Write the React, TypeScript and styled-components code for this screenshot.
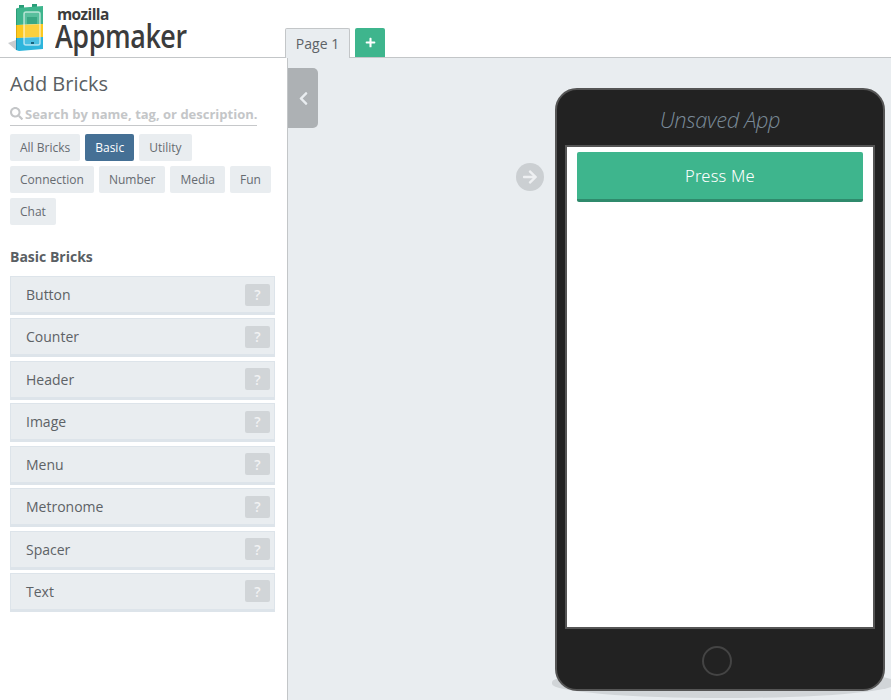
import { createGlobalStyle, styled } from "styled-components"
import { FaArrowRight, FaChevronLeft, FaPlus, FaSearch } from "react-icons/fa"

const GlobalStyle = createGlobalStyle`
  html, body {
    margin: 0;
    height: 100%;
    overflow: hidden;
    background: #fff;
  }
  body {
    font-family: "Open Sans", "Liberation Sans", sans-serif;
    color: #5a5f64;
  }
  * {
    box-sizing: border-box;
  }
`

const Page = styled.div`
  width: 891px;
  height: 700px;
  display: flex;
  flex-direction: column;
`

const TopBar = styled.header`
  height: 58px;
  flex: none;
  display: flex;
  align-items: flex-end;
  border-bottom: 1px solid #c3c6c8;
`

const LogoWrap = styled.div`
  width: 285px;
  height: 57px;
  flex: none;
  display: flex;
  padding: 4px 0 0 8px;
  gap: 9px;
`

const LogoWords = styled.div`
  display: flex;
  flex-direction: column;
`

const LogoSmall = styled.span`
  font-size: 15.5px;
  font-weight: 700;
  line-height: 18px;
  letter-spacing: -0.6px;
  color: #3c3c3c;
  padding: 1px 0 0 2px;
`

const LogoBig = styled.span`
  font-size: 32px;
  font-weight: 600;
  line-height: 26px;
  letter-spacing: -0.5px;
  color: #3c3c3c;
  white-space: nowrap;
  transform: scaleX(0.84);
  transform-origin: left center;
`

const Tab = styled.div`
  width: 65px;
  height: 30px;
  margin-bottom: -1px;
  display: flex;
  align-items: center;
  justify-content: center;
  font-size: 14px;
  color: #5d6266;
  background: #e9edf0;
  border: 1px solid #c3c6c8;
  border-bottom: none;
  border-radius: 2px 2px 0 0;
`

const AddTab = styled.button`
  width: 30px;
  height: 29px;
  margin-left: 5px;
  padding: 0;
  display: flex;
  align-items: center;
  justify-content: center;
  border: none;
  border-radius: 2px 2px 0 0;
  background: #3eb58d;
  color: #fff;
  font-size: 11px;
`

const Content = styled.div`
  flex: 1;
  min-height: 0;
  display: flex;
`

const Sidebar = styled.aside`
  width: 288px;
  flex: none;
  padding: 12px 12px 0 10px;
  border-right: 1px solid #c3c6c8;
  background: #fff;
`

const Title = styled.h1`
  margin: 0;
  font-size: 20px;
  font-weight: 400;
  line-height: 28px;
  color: #5a5f64;
`

const SearchRow = styled.div`
  width: 247px;
  height: 24px;
  margin-top: 4px;
  display: flex;
  align-items: center;
  gap: 2px;
  border-bottom: 1px solid #c6c8ca;
  color: #c4c6c8;
  font-size: 13px;
  font-weight: 700;
  white-space: nowrap;
  svg {
    font-size: 13px;
    flex: none;
  }
`

const Chips = styled.div`
  margin-top: 8px;
  display: flex;
  flex-wrap: wrap;
  gap: 5px;
`

const Chip = styled.button<{ $active?: boolean }>`
  height: 27px;
  padding: 0 10px;
  border: none;
  border-radius: 2px;
  font-family: inherit;
  font-size: 12px;
  color: ${(p) => (p.$active ? "#fff" : "#666b70")};
  background: ${(p) => (p.$active ? "#457095" : "#e9edf0")};
`

const SectionTitle = styled.h2`
  margin: 22px 0 9px;
  font-size: 14px;
  font-weight: 700;
  line-height: 20px;
  color: #5a5f64;
`

const BrickList = styled.ul`
  margin: 0;
  padding: 0;
  list-style: none;
  width: 265px;
  display: flex;
  flex-direction: column;
  gap: 3.43px;
`

const Brick = styled.li`
  height: 39px;
  display: flex;
  align-items: center;
  justify-content: space-between;
  padding: 0 4px 0 15px;
  font-size: 14px;
  color: #5d6266;
  background: #e9edf0;
  border: 1px solid #dde4ea;
  border-bottom-width: 3px;
`

const HelpBadge = styled.span`
  width: 25px;
  height: 22px;
  display: flex;
  align-items: center;
  justify-content: center;
  border-radius: 2px;
  font-size: 14px;
  font-weight: 600;
  color: #f1f2f3;
  background: #d1d5d8;
`

const Workspace = styled.main`
  flex: 1;
  min-width: 0;
  height: 100%;
  display: flex;
  align-items: flex-start;
  background: #e9edf0;
  isolation: isolate;
  overflow: hidden;
`

const CollapseHandle = styled.button`
  width: 30px;
  height: 60px;
  margin-top: 10px;
  padding: 0;
  flex: none;
  display: flex;
  align-items: center;
  justify-content: center;
  border: none;
  border-radius: 0 5px 5px 0;
  background: #adb1b4;
  color: #e9edf0;
  font-size: 15px;
`

const Stage = styled.div`
  flex: 1;
  display: flex;
  justify-content: flex-end;
  align-items: flex-start;
  padding: 30px 6px 0 0;
  gap: 11px;
`

const NextButton = styled.div`
  width: 28px;
  height: 28px;
  margin-top: 75px;
  flex: none;
  display: flex;
  align-items: center;
  justify-content: center;
  border-radius: 50%;
  background: #cbcfd2;
  color: #eef0f2;
  font-size: 16px;
`

const Phone = styled.div`
  position: relative;
  width: 330px;
  height: 603px;
  flex: none;
  display: flex;
  flex-direction: column;
  align-items: center;
  padding: 0 8px;
  background: #222;
  border: 2px solid #555;
  border-radius: 22px;
  &::before {
    content: "";
    position: absolute;
    z-index: -1;
    left: -5px;
    right: -12px;
    bottom: -9px;
    height: 30px;
    border-radius: 50%/14px;
    background: #d1d5d8;
  }
`

const PhoneTitle = styled.div`
  height: 55px;
  padding-top: 4px;
  flex: none;
  display: flex;
  align-items: center;
  font-size: 21.8px;
  font-style: italic;
  font-weight: 300;
  color: #7a8a98;
  letter-spacing: -0.3px;
`

const Screen = styled.div`
  width: 310px;
  height: 484px;
  flex: none;
  padding: 5px 10px 0;
  background: #fff;
  border: 2px solid #555;
`

const PressButton = styled.button`
  width: 100%;
  height: 50px;
  border: none;
  border-bottom: 3px solid #2f8a6c;
  border-radius: 2px;
  background: #3eb58d;
  color: #fff;
  font-family: "Noto Sans", "Open Sans", sans-serif;
  font-size: 16.5px;
  font-weight: 300;
  letter-spacing: 0.2px;
`

const HomeRing = styled.div`
  width: 30px;
  height: 30px;
  margin: 17px 6px 0 0;
  flex: none;
  border: 2px solid #444;
  border-radius: 50%;
`

const LogoMark = () => (
  <svg width="38" height="48" viewBox="0 0 38 48">
    <polygon points="0,39 8,36 8,46" fill="#c9cccf" />
    <rect x="11" y="1" width="5" height="4" fill="#2a9d78" />
    <rect x="24" y="0" width="5" height="4" fill="#2a9d78" />
    <polygon points="9,4 35,2 35,20 9,21" fill="#3eb58d" />
    <polygon points="9,4 9,21 8,21 8,5" fill="#2c9c78" />
    <polygon points="9,21 35,20 35,33 9,34" fill="#fcc91f" />
    <polygon points="9,21 9,34 8,34 8,21" fill="#e0aa10" />
    <polygon points="9,34 35,33 35,45 11,47 8,46" fill="#2db5dc" />
    <polygon points="9,34 9,46 8,46 8,34" fill="#1c93b8" />
    <rect x="16" y="8" width="16" height="33" rx="2" fill="#fff" fillOpacity="0.14" stroke="#fff" strokeOpacity="0.6" strokeWidth="1.5" />
    <rect x="19" y="13" width="10" height="7" fill="#2c9c78" fillOpacity="0.7" />
    <rect x="23" y="38" width="3" height="2" fill="#14617c" />
  </svg>
)

const categories = [
  ["All Bricks", false],
  ["Basic", true],
  ["Utility", false],
  ["Connection", false],
  ["Number", false],
  ["Media", false],
  ["Fun", false],
  ["Chat", false],
] as const

const bricks = ["Button", "Counter", "Header", "Image", "Menu", "Metronome", "Spacer", "Text"]

export default function App() {
  return (
    <Page>
      <GlobalStyle />
      <TopBar>
        <LogoWrap>
          <LogoMark />
          <LogoWords>
            <LogoSmall>mozilla</LogoSmall>
            <LogoBig>Appmaker</LogoBig>
          </LogoWords>
        </LogoWrap>
        <Tab>Page 1</Tab>
        <AddTab>
          <FaPlus />
        </AddTab>
      </TopBar>
      <Content>
        <Sidebar>
          <Title>Add Bricks</Title>
          <SearchRow>
            <FaSearch />
            Search by name, tag, or description.
          </SearchRow>
          <Chips>
            {categories.map(([label, active]) => (
              <Chip key={label} $active={active}>
                {label}
              </Chip>
            ))}
          </Chips>
          <SectionTitle>Basic Bricks</SectionTitle>
          <BrickList>
            {bricks.map((name) => (
              <Brick key={name}>
                {name}
                <HelpBadge>?</HelpBadge>
              </Brick>
            ))}
          </BrickList>
        </Sidebar>
        <Workspace>
          <CollapseHandle>
            <FaChevronLeft />
          </CollapseHandle>
          <Stage>
            <NextButton>
              <FaArrowRight />
            </NextButton>
            <Phone>
              <PhoneTitle>Unsaved App</PhoneTitle>
              <Screen>
                <PressButton>Press Me</PressButton>
              </Screen>
              <HomeRing />
            </Phone>
          </Stage>
        </Workspace>
      </Content>
    </Page>
  )
}
